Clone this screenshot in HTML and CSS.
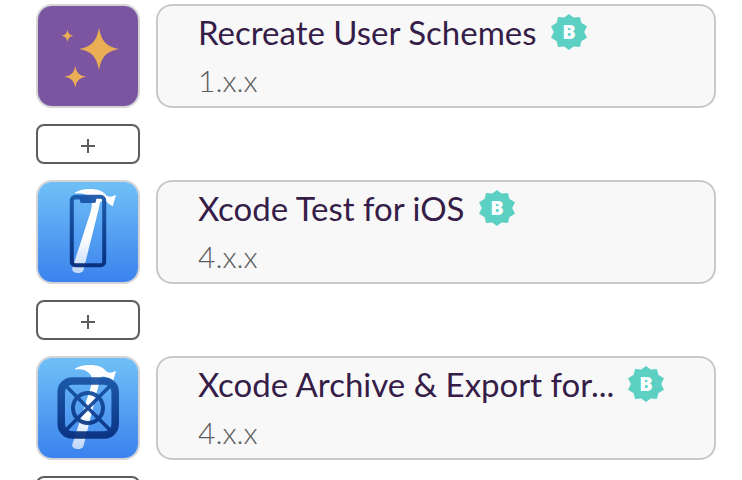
FILE: index.html
```
<!DOCTYPE html>
<html lang="en">

<head>
    <meta charset="UTF-8">
    <meta name="viewport" content="width=device-width, initial-scale=1.0">
    <title>Workflow steps</title>
    <link rel="stylesheet" href="styles.css">
</head>

<body>
    <!-- shared shapes -->
    <svg class="defs" aria-hidden="true">
        <defs>
            <linearGradient id="sky" x1="0" y1="0" x2="0" y2="1">
                <stop offset="0" stop-color="#70c0f6" />
                <stop offset="1" stop-color="#3b82ee" />
            </linearGradient>
            <linearGradient id="navy" gradientUnits="userSpaceOnUse" x1="0" y1="13" x2="0" y2="85">
                <stop offset="0" stop-color="#1a57aa" />
                <stop offset="1" stop-color="#052a78" />
            </linearGradient>
            <linearGradient id="handle" gradientUnits="userSpaceOnUse" x1="0" y1="55" x2="0" y2="92">
                <stop offset="0" stop-color="#fff" />
                <stop offset="1" stop-color="#bdd6fa" />
            </linearGradient>
            <symbol id="hammer" viewBox="0 0 100 100">
                <path fill="url(#handle)" d="M37 10.5C44 6.500 55 6 63 9C66 10.200 67.500 13.500 70.500 14.500C73.500 15.300 75 13.500 78 13L74.700 24.300L70 21.300C68 18.500 65 17.500 62.500 20C61.500 21.500 61.500 23 61 25.500L45.500 88C44 93 33 91.500 34.300 86.500L52.500 30C54 24 55 19 51.500 15.500C48 11.500 43 10.500 37 11.500Z" />
            </symbol>
            <symbol id="badge" viewBox="0 0 36 36">
                <polygon fill="#5dd0c4" points="18,0 22.7,3.5 28.9,3 30.5,8.9 36,12.2 33.2,18 36,23.8 30.5,27.1 28.9,33 22.7,32.5 18,36 13.3,32.5 7.1,33 5.5,27.1 0,23.8 2.8,18 0,12.2 5.5,8.9 7.1,3 13.3,3.5" />
                <text class="badge-letter" x="18" y="25" text-anchor="middle">B</text>
            </symbol>
        </defs>
    </svg>

    <main class="workflow">
        <div class="step">
            <svg class="step-icon" viewBox="0 0 100 100" aria-hidden="true">
                <rect width="100" height="100" fill="#7b559f" />
                <g fill="#eaae55">
                    <path d="M61 22C63.500 35 68 40.500 81 43C68 45.500 63.500 51 61 64C58.500 51 54 45.500 41 43C54 40.500 58.500 35 61 22Z" />
                    <path d="M37.300 60C38.800 67 41 69.200 48 70.700C41 72.200 38.800 74.500 37.300 81.500C35.800 74.500 33.600 72.200 26.500 70.700C33.600 69.200 35.800 67 37.300 60Z" />
                    <path d="M29.500 23.500C30.300 27.500 31.500 28.900 35.500 29.700C31.500 30.500 30.300 31.900 29.500 35.900C28.700 31.900 27.500 30.500 23.500 29.700C27.500 28.900 28.700 27.500 29.500 23.500Z" />
                </g>
            </svg>
            <div class="step-card">
                <div class="step-title">
                    <h2>Recreate User Schemes</h2>
                    <svg class="badge" role="img" aria-label="Bitrise step"><use href="#badge" /></svg>
                </div>
                <p class="version">1.x.x</p>
            </div>
        </div>

        <button class="add-step" type="button" aria-label="Add step">
            <svg viewBox="0 0 14 14" aria-hidden="true"><path d="M7 0V14M0 7H14" /></svg>
        </button>

        <div class="step">
            <svg class="step-icon" viewBox="0 0 100 100" aria-hidden="true">
                <rect width="100" height="100" fill="url(#sky)" />
                <use href="#hammer" />
                <path fill="#3a78c4" opacity=".75" d="M34 15H49Q52.500 17 53 21H44Q42 21 42 18H35Z" />
                <g opacity=".95">
                    <rect x="33.800" y="14.800" width="32.400" height="68.400" rx="3.500" fill="none" stroke="url(#navy)" stroke-width="4" />
                    <path fill="#1a57aa" d="M41 15H59Q58 17 58 19Q58 21 56 21H44Q42 21 42 19Q42 17 41 15Z" />
                </g>
            </svg>
            <div class="step-card">
                <div class="step-title">
                    <h2>Xcode Test for iOS</h2>
                    <svg class="badge" role="img" aria-label="Bitrise step"><use href="#badge" /></svg>
                </div>
                <p class="version">4.x.x</p>
            </div>
        </div>

        <button class="add-step" type="button" aria-label="Add step">
            <svg viewBox="0 0 14 14" aria-hidden="true"><path d="M7 0V14M0 7H14" /></svg>
        </button>

        <div class="step">
            <svg class="step-icon" viewBox="0 0 100 100" aria-hidden="true">
                <rect width="100" height="100" fill="url(#sky)" />
                <use href="#hammer" />
                <g fill="none" stroke="url(#navy)" opacity=".93">
                    <rect x="23.200" y="23" width="54" height="54" rx="11" stroke-width="7.500" />
                    <circle cx="50" cy="50" r="15" stroke-width="4" />
                    <path stroke-width="3.500" d="M27 27L73 73M73 27L27 73" />
                </g>
            </svg>
            <div class="step-card">
                <div class="step-title">
                    <h2>Xcode Archive &amp; Export for...</h2>
                    <svg class="badge" role="img" aria-label="Bitrise step"><use href="#badge" /></svg>
                </div>
                <p class="version">4.x.x</p>
            </div>
        </div>

        <button class="add-step" type="button" aria-label="Add step">
            <svg viewBox="0 0 14 14" aria-hidden="true"><path d="M7 0V14M0 7H14" /></svg>
        </button>
    </main>
</body>

</html>
```
FILE: styles.css
```
* {
    box-sizing: border-box;
}

body {
    margin: 0;
    background-color: #fff;
    font-family: Lato, "Liberation Sans", sans-serif;
}

.defs {
    position: absolute;
    width: 0;
    height: 0;
}

.workflow {
    display: flex;
    flex-direction: column;
    gap: 16px;
    height: 100vh;
    padding: 4px 26px 0 36px;
    overflow: hidden;
}

.step {
    display: flex;
    flex-shrink: 0;
    gap: 16px;
}

.step-icon {
    flex-shrink: 0;
    width: 104px;
    height: 104px;
    border: 2px solid #d4d4d6;
    border-radius: 16px;
}

.step-card {
    flex: 1;
    min-width: 0;
    padding: 2px 40px;
    background-color: #f8f8f8;
    border: 2px solid #c9c9c9;
    border-radius: 16px;
}

.step-title {
    display: flex;
    align-items: center;
    gap: 14px;
    height: 48px;
}

h2 {
    margin: 0;
    color: #351d48;
    font-size: 33px;
    font-weight: 400;
    line-height: 48px;
    white-space: nowrap;
}

.badge {
    flex-shrink: 0;
    width: 36px;
    height: 36px;
}

.badge-letter {
    fill: #fff;
    font-family: "Open Sans", sans-serif;
    font-size: 20px;
    font-weight: 800;
}

.version {
    margin: 0;
    color: #5c5c5c;
    font-size: 30px;
    font-weight: 300;
    line-height: 48px;
}

.add-step {
    display: flex;
    flex-shrink: 0;
    align-items: center;
    justify-content: center;
    width: 104px;
    height: 40px;
    padding: 4px 0 0;
    background-color: #fff;
    border: 2px solid #5c5c5c;
    border-radius: 8px;
    cursor: pointer;
}

.add-step svg {
    width: 14px;
    height: 14px;
    stroke: #5c5c5c;
    stroke-width: 2;
}
```
